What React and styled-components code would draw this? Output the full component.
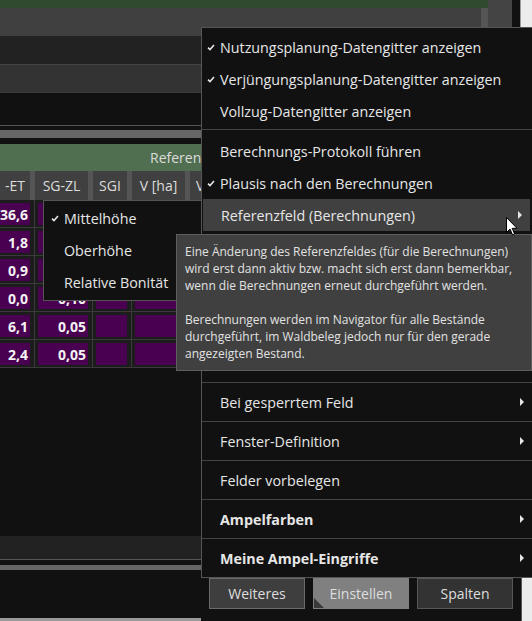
import React from "react";
import styled, { createGlobalStyle } from "styled-components";

const GlobalStyle = createGlobalStyle`
  html, body {
    margin: 0;
    padding: 0;
    background: #111;
  }
  body {
    font-family: "Open Sans", "Noto Sans", "Liberation Sans", sans-serif;
    color: #e6e6e6;
  }
`;

const Screen = styled.div`
  position: relative;
  width: 532px;
  height: 621px;
  overflow: hidden;
  display: flex;
  background: #111;
`;

const Workspace = styled.div`
  width: 488px;
  display: flex;
  flex-direction: column;
`;

const SideRail = styled.div`
  width: 24px;
  background: #444;
`;

const Gutter = styled.div`
  width: 8px;
  background: #111;
`;

const EdgeStrip = styled.div`
  flex: 1;
  background: #ececec;
  border-left: 1px solid #9a9a9a;
`;

const TitleStrip = styled.div`
  height: 8px;
  background: #304a30;
`;

const Toolbar = styled.div`
  height: 28px;
  background: #404040;
  border-right: 7px solid #555;
`;

const Band = styled.div`
  height: ${(p) => p.$h}px;
  background: ${(p) => p.$tone};
  border-bottom: 1px solid ${(p) => p.$line};
`;

const ScrollTrack = styled.div`
  padding: ${(p) => p.$pad};
`;

const ScrollThumb = styled.div`
  height: ${(p) => p.$h}px;
  background: #666;
`;

const GroupHeader = styled.div`
  height: 27px;
  line-height: 27px;
  background: #506e50;
  padding-left: 150px;
  font-size: 14px;
  color: #dcdcdc;
  white-space: nowrap;
`;

const Grid = styled.div`
  display: grid;
  grid-template-columns: 35px 58px 39px 58px 1fr;
`;

const HeadCell = styled.div`
  height: 29px;
  line-height: 29px;
  background: #404040;
  border-right: 5px solid #555;
  text-align: ${(p) => (p.$left ? "left" : "center")};
  padding-left: ${(p) => (p.$left ? 6 : 0)}px;
  font-size: 14px;
  color: #dcdcdc;
  white-space: nowrap;
  overflow: hidden;
`;

const DataCell = styled.div`
  height: 28px;
  box-sizing: border-box;
  padding: 3px 4px 2px ${(p) => (p.$first ? 0 : 3)}px;
  background: #1c1c1c;
  border-right: 1px solid #3a3a3a;
  border-bottom: 1px solid #3a3a3a;
`;

const Value = styled.div`
  height: 100%;
  background: #4a0050;
  text-align: right;
  padding-right: 2px;
  font-size: 14px;
  font-weight: 700;
  line-height: 23px;
  color: #f2f2f2;
`;

const Filler = styled.div`
  flex: 1;
`;

const BottomRule = styled.div`
  height: 3px;
  background: #9a9a9a;
`;

const Blank = styled.div`
  height: ${(p) => p.$h}px;
`;

/* overlays */

const Menu = styled.div`
  position: absolute;
  left: 201px;
  top: 27px;
  width: 332px;
  background: #111;
  border: 1px solid #555;
  padding-top: 3px;
  box-sizing: border-box;
`;

const MenuItem = styled.div`
  position: relative;
  height: ${(p) => (p.$tall ? 38 : 32)}px;
  display: flex;
  align-items: center;
  padding-left: 18px;
  margin-left: ${(p) => (p.$active ? 1 : 0)}px;
  margin-right: ${(p) => (p.$active ? 2 : 0)}px;
  font-size: 14.3px;
  font-weight: ${(p) => (p.$bold ? 700 : 400)};
  background: ${(p) => (p.$active ? "#404040" : "transparent")};
  border-top: ${(p) => (p.$ruled ? "1px solid #444" : "none")};
  color: #e6e6e6;
  white-space: nowrap;
`;

const Separator = styled.div`
  height: 1px;
  background: #444;
  margin: 2px 0 5px;
`;

const HiddenGroup = styled.div`
  height: 151px;
`;

const CheckMark = styled.svg`
  position: absolute;
  left: ${(p) => p.$left}px;
  top: 50%;
  margin-top: -3px;
`;

const Arrow = styled.span`
  position: absolute;
  right: 8px;
  top: 50%;
  margin-top: -4px;
  width: 0;
  height: 0;
  border-top: 4px solid transparent;
  border-bottom: 4px solid transparent;
  border-left: 4px solid #e6e6e6;
`;

const SubMenu = styled.div`
  position: absolute;
  left: 43px;
  top: 200px;
  width: 159px;
  background: #111;
  border: 1px solid #555;
  padding: 1px 0 2px;
  box-sizing: border-box;
`;

const SubItem = styled.div`
  position: relative;
  height: 32px;
  display: flex;
  align-items: center;
  padding-left: 20px;
  font-size: 14.3px;
  color: #e6e6e6;
  white-space: nowrap;
`;

const Tooltip = styled.div`
  position: absolute;
  left: 176px;
  top: 234px;
  width: 356px;
  height: 137px;
  box-sizing: border-box;
  background: #404040;
  border: 1px solid #5e5e5e;
  padding: 8px 8px;
  font-size: 12px;
  line-height: 17px;
  color: #e2e2e2;
`;

const TipPara = styled.p`
  margin: 0 0 17px;
`;

const ButtonPanel = styled.div`
  position: absolute;
  left: 201px;
  top: 578px;
  width: 321px;
  height: 43px;
  box-sizing: border-box;
  background: #111;
  border-right: 1px solid #555;
  display: flex;
  gap: 8px;
  padding: 0 0 0 8px;
`;

const PanelButton = styled.div`
  position: relative;
  width: 96px;
  height: 31px;
  box-sizing: border-box;
  display: flex;
  align-items: center;
  justify-content: center;
  font-size: 14px;
  color: #dedede;
  background: ${(p) => p.$bg};
  border: 1px solid ${(p) => p.$border};
  overflow: hidden;

  ${(p) =>
    p.$pressed &&
    `
    &::before {
      content: "";
      position: absolute;
      left: 0;
      bottom: 0;
      border-bottom: 10px solid #3a3a3a;
      border-right: 10px solid transparent;
    }
  `}
`;

const Cursor = styled.svg`
  position: absolute;
  left: 506px;
  top: 217px;
`;

const Check = ({ left }) => (
  <CheckMark $left={left} width="8" height="7" viewBox="0 0 8 7">
    <path d="M1 3.6 L3 5.6 L7 1" fill="none" stroke="#e6e6e6" strokeWidth="1.6" />
  </CheckMark>
);

const columns = ["-ET", "SG-ZL", "SGI", "V [ha]", "VJ"];
const rows = [
  ["36,6", "0,12"],
  ["1,8", "0,08"],
  ["0,9", "0,07"],
  ["0,0", "0,10"],
  ["6,1", "0,05"],
  ["2,4", "0,05"],
];

export default function App() {
  return (
    <>
      <GlobalStyle />
      <Screen>
        <Workspace>
          <TitleStrip />
          <Toolbar />
          <Band $h={28} $tone="#222" $line="#444" />
          <Band $h={27} $tone="#333" $line="#3a3a3a" />
          <Band $h={32} $tone="#111" $line="#555" />
          <ScrollTrack $pad="4px 0 6px">
            <ScrollThumb $h={8} />
          </ScrollTrack>
          <GroupHeader>Referenzwerte</GroupHeader>
          <Grid>
            {columns.map((c, i) => (
              <HeadCell key={c} $left={i === columns.length - 1}>
                {c}
              </HeadCell>
            ))}
            {rows.map((r, i) => (
              <React.Fragment key={i}>
                <DataCell $first>
                  <Value>{r[0]}</Value>
                </DataCell>
                <DataCell>
                  <Value>{r[1]}</Value>
                </DataCell>
                <DataCell>
                  <Value />
                </DataCell>
                <DataCell>
                  <Value />
                </DataCell>
                <DataCell>
                  <Value />
                </DataCell>
              </React.Fragment>
            ))}
          </Grid>
          <Filler />
          <Band $h={23} $tone="#222" $line="#555" />
          <ScrollTrack $pad="5px 0 0">
            <ScrollThumb $h={5} />
          </ScrollTrack>
          <Blank $h={48} />
          <BottomRule />
        </Workspace>
        <SideRail />
        <Gutter />
        <EdgeStrip />

        <Menu>
          <MenuItem>
            <Check left={5} />
            Nutzungsplanung-Datengitter anzeigen
          </MenuItem>
          <MenuItem>
            <Check left={5} />
            Verjüngungsplanung-Datengitter anzeigen
          </MenuItem>
          <MenuItem>Vollzug-Datengitter anzeigen</MenuItem>
          <Separator />
          <MenuItem>Berechnungs-Protokoll führen</MenuItem>
          <MenuItem>
            <Check left={5} />
            Plausis nach den Berechnungen
          </MenuItem>
          <MenuItem $active>
            Referenzfeld (Berechnungen)
            <Arrow />
          </MenuItem>
          <HiddenGroup />
          <MenuItem $tall $ruled>
            Bei gesperrtem Feld
            <Arrow />
          </MenuItem>
          <MenuItem $tall $ruled>
            Fenster-Definition
            <Arrow />
          </MenuItem>
          <MenuItem $tall $ruled>
            Felder vorbelegen
          </MenuItem>
          <MenuItem $tall $ruled $bold>
            Ampelfarben
            <Arrow />
          </MenuItem>
          <MenuItem $tall $ruled $bold>
            Meine Ampel-Eingriffe
            <Arrow />
          </MenuItem>
        </Menu>

        <SubMenu>
          <SubItem>
            <Check left={7} />
            Mittelhöhe
          </SubItem>
          <SubItem>Oberhöhe</SubItem>
          <SubItem>Relative Bonität</SubItem>
        </SubMenu>

        <Tooltip>
          <TipPara>
            Eine Änderung des Referenzfeldes (für die Berechnungen) wird erst
            dann aktiv bzw. macht sich erst dann bemerkbar, wenn die
            Berechnungen erneut durchgeführt werden.
          </TipPara>
          <TipPara>
            Berechnungen werden im Navigator für alle Bestände durchgeführt, im
            Waldbeleg jedoch nur für den gerade angezeigten Bestand.
          </TipPara>
        </Tooltip>

        <ButtonPanel>
          <PanelButton $bg="#3e3e3e" $border="#6a6a6a">
            Weiteres
          </PanelButton>
          <PanelButton $bg="#808080" $border="#808080" $pressed>
            Einstellen
          </PanelButton>
          <PanelButton $bg="#333" $border="#575757">
            Spalten
          </PanelButton>
        </ButtonPanel>

        <Cursor width="12" height="19" viewBox="0 0 12 19">
          <path
            d="M0.5 0.5 L0.5 15.5 L4 12 L6.5 17.8 L8.6 16.9 L6.2 11.3 L11 11.3 Z"
            fill="#fff"
            stroke="#000"
            strokeWidth="1"
          />
        </Cursor>
      </Screen>
    </>
  );
}
